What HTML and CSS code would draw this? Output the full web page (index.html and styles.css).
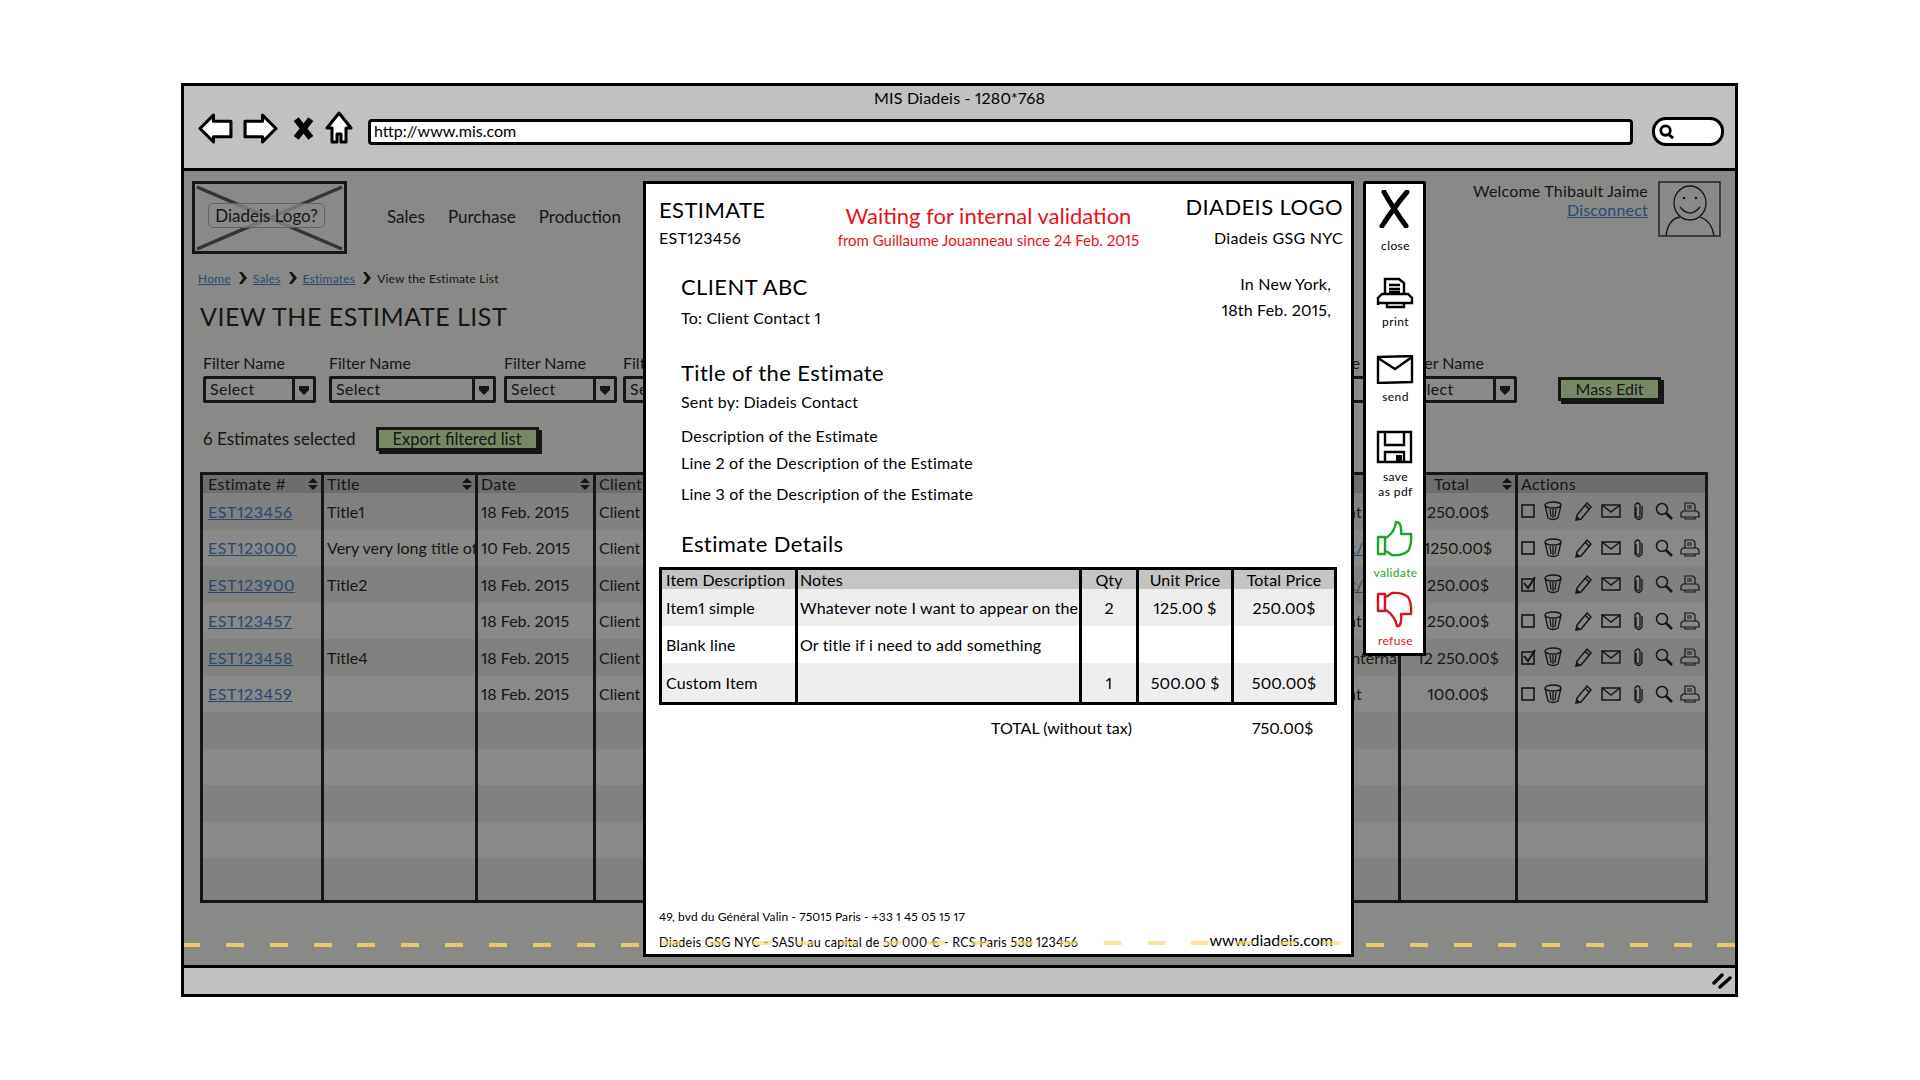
FILE: index.html
```html
<!DOCTYPE html>
<html lang="en">

<head>
    <meta charset="UTF-8">
    <title>MIS Diadeis - 1280*768</title>
    <link rel="stylesheet" href="styles.css">
</head>

<body>
    <svg class="sprites" width="0" height="0">
        <symbol id="sort" viewBox="0 0 10 12"><path d="M5 0 L10 5 H0 Z M0 7 H10 L5 12 Z" /></symbol>
        <symbol id="box" viewBox="0 0 16 16"><rect x="2" y="2" width="12" height="12" fill="none" stroke="#000" stroke-width="1.6" /></symbol>
        <symbol id="boxed" viewBox="0 0 16 16"><rect x="2" y="3" width="12" height="12" fill="none" stroke="#000" stroke-width="1.6" /><path d="M4 7 L8 12 L15 1" fill="none" stroke="#000" stroke-width="2" /></symbol>
        <symbol id="trash" viewBox="0 0 18 20"><g fill="none" stroke="#000" stroke-width="1.3"><ellipse cx="9" cy="4" rx="8" ry="3" /><path d="M1 4 L4 17 Q9 20 14 17 L17 4 M6 8 L7 16 M9 8 V17 M12 8 L11 16" /></g></symbol>
        <symbol id="pencil" viewBox="0 0 18 20"><g fill="none" stroke="#000" stroke-width="1.5"><path d="M12 2 L16 6 L6 18 L1 19 L2 14 Z M10 4 L14 8" /></g><path d="M1 19 L2 15 L5 18 Z" /></symbol>
        <symbol id="mail" viewBox="0 0 20 16"><g fill="none" stroke="#000" stroke-width="1.5"><rect x="1" y="2" width="18" height="12" /><path d="M1 2 L10 9 L19 2" /></g></symbol>
        <symbol id="clip" viewBox="0 0 10 20"><path d="M3 6 V15 Q5 18 7 15 V4 Q5 0 2 4 V16 Q5 21 9 16 V5" fill="none" stroke="#000" stroke-width="1.3" /></symbol>
        <symbol id="search" viewBox="0 0 18 18"><g fill="none" stroke="#000"><circle cx="7" cy="7" r="5.5" stroke-width="1.5" /><path d="M11 11 L17 17" stroke-width="2.6" /></g></symbol>
        <symbol id="printer" viewBox="0 0 20 18"><g fill="none" stroke="#000" stroke-width="1.2"><path d="M5 9 V1 H13 L15 3 V9 M7 4 H12 M7 6 H12" /><path d="M1 15 V11 L3 9 H17 L19 11 V15 Z M5 15 V17 H15 V15" /></g></symbol>
        <symbol id="arrow" viewBox="0 0 12 12"><path d="M1 2 H11 V6 L6 11 L1 6 Z" /></symbol>
        <symbol id="crumb" viewBox="0 0 8 12"><path d="M0 0 H3 L8 6 L3 12 H0 L4 6 Z" /></symbol>
    </svg>

    <div class="window">
        <div class="toolbar">
            <div class="window-title">MIS Diadeis - 1280*768</div>
            <div class="nav-row">
                <svg class="nav-arrow" viewBox="0 0 34 30"><path d="M2 15 L15 2 V8 H32 V23 H15 V28 Z" fill="#fff" stroke="#000" stroke-width="3" stroke-linejoin="round" /></svg>
                <svg class="nav-arrow" viewBox="0 0 34 30"><path d="M32 15 L19 2 V8 H2 V23 H19 V28 Z" fill="#fff" stroke="#000" stroke-width="3" stroke-linejoin="round" /></svg>
                <svg class="nav-stop" viewBox="0 0 20 22"><path d="M3 2 L17 20 M17 2 L3 20" fill="none" stroke="#000" stroke-width="6" /></svg>
                <svg class="nav-home" viewBox="0 0 28 34"><path d="M14 2 L26 17 H21 V31 H16 V23 H12 V31 H7 V17 H2 Z" fill="#fff" stroke="#000" stroke-width="3" stroke-linejoin="round" /></svg>
                <div class="url-bar">http://www.mis.com</div>
                <div class="search-box">
                    <svg class="search-icon" viewBox="0 0 18 18"><circle cx="8" cy="8" r="5" fill="none" stroke="#000" stroke-width="3" /><path d="M11 12 L16 16" stroke="#000" stroke-width="3" /></svg>
                </div>
            </div>
        </div>

        <div class="content">
            <div class="top-row">
                <div class="logo">
                    <svg class="logo-cross" viewBox="0 0 149 67" preserveAspectRatio="none"><path d="M2 3 L147 65 M147 3 L2 65" stroke="#444" stroke-width="3.5" /></svg>
                    <span class="logo-label">Diadeis Logo?</span>
                </div>
                <nav class="menu">
                    <span>Sales</span>
                    <span>Purchase</span>
                    <span>Production</span>
                    <span>Tools</span>
                </nav>
                <div class="user">
                    <div class="user-text">
                        <div>Welcome Thibault Jaime</div>
                        <a class="link" href="#">Disconnect</a>
                    </div>
                    <svg class="avatar" viewBox="0 0 63 56">
                        <g fill="none" stroke="#000" stroke-width="1.3">
                            <rect x="1" y="1" width="61" height="54" />
                            <ellipse cx="32" cy="22" rx="16" ry="17" />
                            <path d="M22 26 Q32 38 42 26 M8 55 Q10 38 22 36 M42 36 Q54 40 56 55" />
                        </g>
                        <circle cx="26" cy="17" r="1.3" /><circle cx="38" cy="17" r="1.3" />
                    </svg>
                </div>
            </div>

            <div class="breadcrumb">
                <a class="link" href="#">Home</a><svg class="crumb"><use href="#crumb" /></svg>
                <a class="link" href="#">Sales</a><svg class="crumb"><use href="#crumb" /></svg>
                <a class="link" href="#">Estimates</a><svg class="crumb"><use href="#crumb" /></svg>
                <span>View the Estimate List</span>
            </div>

            <h1 class="page-title">VIEW THE ESTIMATE LIST</h1>

            <div class="filters">
                <div class="filter filter-sm"><label>Filter Name</label><div class="select"><span>Select</span><i><svg><use href="#arrow" /></svg></i></div></div>
                <div class="filter filter-lg"><label>Filter Name</label><div class="select"><span>Select</span><i><svg><use href="#arrow" /></svg></i></div></div>
                <div class="filter filter-sm"><label>Filter Name</label><div class="select"><span>Select</span><i><svg><use href="#arrow" /></svg></i></div></div>
                <div class="filter filter-sm"><label>Filter Name</label><div class="select"><span>Select</span><i><svg><use href="#arrow" /></svg></i></div></div>
                <div class="filter filter-sm"><label>Filter Name</label><div class="select"><span>Select</span><i><svg><use href="#arrow" /></svg></i></div></div>
                <div class="filter filter-md"><label>Filter Name</label><div class="select"><span>Select</span><i><svg><use href="#arrow" /></svg></i></div></div>
                <button class="btn btn-mass">Mass Edit</button>
            </div>

            <div class="selection">
                <span>6 Estimates selected</span>
                <button class="btn btn-export">Export filtered list</button>
            </div>

            <table class="list">
                <colgroup>
                    <col class="c-num"><col class="c-title"><col class="c-date"><col class="c-client">
                    <col class="c-owner"><col class="c-valid"><col class="c-status"><col class="c-total"><col class="c-act">
                </colgroup>
                <thead>
                    <tr>
                        <th>Estimate #<svg class="sort"><use href="#sort" /></svg></th>
                        <th>Title<svg class="sort"><use href="#sort" /></svg></th>
                        <th>Date<svg class="sort"><use href="#sort" /></svg></th>
                        <th>Client</th>
                        <th></th>
                        <th></th>
                        <th></th>
                        <th class="th-total">Total<svg class="sort"><use href="#sort" /></svg></th>
                        <th>Actions</th>
                    </tr>
                </thead>
                <tbody>
                    <tr>
                        <td><a class="link" href="#">EST123456</a></td><td>Title1</td><td>18 Feb. 2015</td><td>Client</td><td></td><td></td><td>Sent</td><td class="num">250.00$</td>
                        <td><div class="acts"><svg class="a-box"><use href="#box" /></svg><svg class="a-trash"><use href="#trash" /></svg><svg class="a-pencil"><use href="#pencil" /></svg><svg class="a-mail"><use href="#mail" /></svg><svg class="a-clip"><use href="#clip" /></svg><svg class="a-search"><use href="#search" /></svg><svg class="a-printer"><use href="#printer" /></svg></div></td>
                    </tr>
                    <tr>
                        <td><a class="link" href="#">EST123000</a></td><td>Very very long title of the estimate</td><td>10 Feb. 2015</td><td>Client</td><td></td><td></td><td><a class="link" href="#">Ask/Edit</a></td><td class="num">1250.00$</td>
                        <td><div class="acts"><svg class="a-box"><use href="#box" /></svg><svg class="a-trash"><use href="#trash" /></svg><svg class="a-pencil"><use href="#pencil" /></svg><svg class="a-mail"><use href="#mail" /></svg><svg class="a-clip"><use href="#clip" /></svg><svg class="a-search"><use href="#search" /></svg><svg class="a-printer"><use href="#printer" /></svg></div></td>
                    </tr>
                    <tr>
                        <td><a class="link" href="#">EST123900</a></td><td>Title2</td><td>18 Feb. 2015</td><td>Client</td><td></td><td></td><td><a class="link" href="#">Ask/Edit</a></td><td class="num">250.00$</td>
                        <td><div class="acts"><svg class="a-box"><use href="#boxed" /></svg><svg class="a-trash"><use href="#trash" /></svg><svg class="a-pencil"><use href="#pencil" /></svg><svg class="a-mail"><use href="#mail" /></svg><svg class="a-clip"><use href="#clip" /></svg><svg class="a-search"><use href="#search" /></svg><svg class="a-printer"><use href="#printer" /></svg></div></td>
                    </tr>
                    <tr>
                        <td><a class="link" href="#">EST123457</a></td><td></td><td>18 Feb. 2015</td><td>Client</td><td></td><td></td><td>Sent</td><td class="num">250.00$</td>
                        <td><div class="acts"><svg class="a-box"><use href="#box" /></svg><svg class="a-trash"><use href="#trash" /></svg><svg class="a-pencil"><use href="#pencil" /></svg><svg class="a-mail"><use href="#mail" /></svg><svg class="a-clip"><use href="#clip" /></svg><svg class="a-search"><use href="#search" /></svg><svg class="a-printer"><use href="#printer" /></svg></div></td>
                    </tr>
                    <tr>
                        <td><a class="link" href="#">EST123458</a></td><td>Title4</td><td>18 Feb. 2015</td><td>Client</td><td></td><td></td><td>In internal</td><td class="num">12 250.00$</td>
                        <td><div class="acts"><svg class="a-box"><use href="#boxed" /></svg><svg class="a-trash"><use href="#trash" /></svg><svg class="a-pencil"><use href="#pencil" /></svg><svg class="a-mail"><use href="#mail" /></svg><svg class="a-clip"><use href="#clip" /></svg><svg class="a-search"><use href="#search" /></svg><svg class="a-printer"><use href="#printer" /></svg></div></td>
                    </tr>
                    <tr>
                        <td><a class="link" href="#">EST123459</a></td><td></td><td>18 Feb. 2015</td><td>Client</td><td></td><td></td><td>Sent</td><td class="num">100.00$</td>
                        <td><div class="acts"><svg class="a-box"><use href="#box" /></svg><svg class="a-trash"><use href="#trash" /></svg><svg class="a-pencil"><use href="#pencil" /></svg><svg class="a-mail"><use href="#mail" /></svg><svg class="a-clip"><use href="#clip" /></svg><svg class="a-search"><use href="#search" /></svg><svg class="a-printer"><use href="#printer" /></svg></div></td>
                    </tr>
                    <tr><td></td><td></td><td></td><td></td><td></td><td></td><td></td><td></td><td></td></tr>
                    <tr><td></td><td></td><td></td><td></td><td></td><td></td><td></td><td></td><td></td></tr>
                    <tr><td></td><td></td><td></td><td></td><td></td><td></td><td></td><td></td><td></td></tr>
                    <tr><td></td><td></td><td></td><td></td><td></td><td></td><td></td><td></td><td></td></tr>
                    <tr class="row-last"><td></td><td></td><td></td><td></td><td></td><td></td><td></td><td></td><td></td></tr>
                </tbody>
            </table>

            <div class="dim"></div>
            <div class="road"></div>

            <div class="modal">
                <div class="road road-pale"></div>
                <header class="modal-head">
                    <div class="head-left">
                        <div class="h-big">ESTIMATE</div>
                        <div class="h-ref">EST123456</div>
                    </div>
                    <div class="head-mid">
                        <div class="wait">Waiting for internal validation</div>
                        <div class="wait-from">from Guillaume Jouanneau since 24 Feb. 2015</div>
                    </div>
                    <div class="head-right">
                        <div class="h-big">DIADEIS LOGO</div>
                        <div class="h-ref h-ref-right">Diadeis GSG NYC</div>
                    </div>
                </header>

                <div class="client">
                    <div>
                        <div class="h-big">CLIENT ABC</div>
                        <div class="line to-line">To: Client Contact 1</div>
                    </div>
                    <div class="place">
                        <div class="line">In New York,</div>
                        <div class="line date-line">18th Feb. 2015,</div>
                    </div>
                </div>

                <div class="body">
                    <div class="h-big title-line">Title of the Estimate</div>
                    <div class="line sent-line">Sent by: Diadeis Contact</div>
                    <div class="line desc-1">Description of the Estimate</div>
                    <div class="line desc-2">Line 2 of the Description of the Estimate</div>
                    <div class="line desc-3">Line 3 of the Description of the Estimate</div>
                    <div class="h-big details-line">Estimate Details</div>
                </div>

                <table class="items">
                    <colgroup>
                        <col class="i-desc"><col class="i-notes"><col class="i-qty"><col class="i-unit"><col class="i-total">
                    </colgroup>
                    <thead>
                        <tr><th>Item Description</th><th>Notes</th><th class="mid">Qty</th><th class="mid">Unit Price</th><th class="mid">Total Price</th></tr>
                    </thead>
                    <tbody>
                        <tr><td>Item1 simple</td><td>Whatever note I want to appear on the</td><td class="mid">2</td><td class="mid">125.00 $</td><td class="mid">250.00$</td></tr>
                        <tr><td>Blank line</td><td>Or title if i need to add something</td><td></td><td></td><td></td></tr>
                        <tr><td>Custom Item</td><td></td><td class="mid">1</td><td class="mid">500.00 $</td><td class="mid">500.00$</td></tr>
                    </tbody>
                </table>

                <div class="total">
                    <span class="total-label">TOTAL (without tax)</span>
                    <span class="total-value">750.00$</span>
                </div>

                <footer class="modal-foot">
                    <div class="addr">49, bvd du Général Valin - 75015 Paris - +33 1 45 05 15 17</div>
                    <div class="legal-row">
                        <span class="legal">Diadeis GSG NYC - SASU au capital de 50 000 € - RCS Paris 538 123456</span>
                        <span class="site">www.diadeis.com</span>
                    </div>
                </footer>
            </div>

            <aside class="side">
                <div class="side-item item-close">
                    <svg class="i-x" viewBox="0 0 32 38"><path d="M5 2 Q14 18 27 36 M28 2 Q16 16 3 36" fill="none" stroke="#000" stroke-width="5" stroke-linecap="round" /></svg>
                    <span>close</span>
                </div>
                <div class="side-item item-print">
                    <svg class="i-print" viewBox="0 0 38 32"><g fill="none" stroke="#000" stroke-width="2.4"><path d="M9 17 V2 H23 L28 6 V17 M13 8 H24 M13 12 H24 M13 15 H24" /><path d="M2 28 V21 L6 17 H32 L36 21 V26 H2 M11 26 V30 H28 V26" /></g></svg>
                    <span>print</span>
                </div>
                <div class="side-item item-send">
                    <svg class="i-send" viewBox="0 0 38 29"><g fill="none" stroke="#000" stroke-width="2.4"><path d="M2 2 L36 1 L36 27 L2 28 Z" /><path d="M2 3 L19 14 L36 2" /></g></svg>
                    <span>send</span>
                </div>
                <div class="side-item item-save">
                    <svg class="i-save" viewBox="0 0 37 34"><g fill="none" stroke="#000" stroke-width="2.4"><path d="M2 2 H35 V32 H2 Z" /><path d="M9 2 V15 H28 V2 M9 32 V22 H28 V32" /></g><rect x="20" y="25" width="6" height="6" /></svg>
                    <span>save<br>as pdf</span>
                </div>
                <div class="side-item item-ok">
                    <svg class="i-thumb" viewBox="0 0 37 37"><g fill="none" stroke="#1fa52a" stroke-width="2.4" stroke-linejoin="round"><path d="M2 17 H9 V34 H2 Z" /><path d="M10 18 Q19 12 20 2 Q26 2 25 14 H35 Q36 24 32 31 Q26 36 16 35 L10 31" /></g></svg>
                    <span>validate</span>
                </div>
                <div class="side-item item-no">
                    <svg class="i-thumb" viewBox="0 0 37 37"><g fill="none" stroke="#d8141c" stroke-width="2.4" stroke-linejoin="round"><path d="M2 3 H9 V20 H2 Z" /><path d="M10 19 Q19 25 21 35 Q26 36 25 23 H35 Q36 13 32 6 Q26 1 16 2 L10 6" /></g></svg>
                    <span>refuse</span>
                </div>
            </aside>
        </div>

        <div class="statusbar">
            <svg class="grip" viewBox="0 0 20 16"><path d="M2 10 L10 2 M8 14 L18 5" fill="none" stroke="#000" stroke-width="3.4" stroke-linecap="round" /></svg>
        </div>
    </div>
</body>

</html>
```

FILE: styles.css
```css
* {
    box-sizing: border-box;
}

body {
    margin: 0;
    height: 1080px;
    overflow: hidden;
    background-color: #fff;
    color: #000;
    font-family: Lato, "Noto Sans", sans-serif;
    font-size: 16px;
    font-variant-numeric: proportional-nums;
    padding: 83px 0 0 181px;
}

a.link {
    color: #2c73d3;
    text-decoration: underline;
}

.sprites {
    position: absolute;
}

.window {
    width: 1557px;
    height: 914px;
    border: 3px solid #000;
    display: flex;
    flex-direction: column;
}

/* browser bar */
.toolbar {
    height: 85px;
    background-color: #c1c1c1;
    border-bottom: 3px solid #000;
    flex-shrink: 0;
}

.window-title {
    text-align: center;
    font-size: 16px;
    line-height: 20px;
    padding-top: 2px;
    height: 21px;
    letter-spacing: 0.2px;
}

.nav-row {
    display: flex;
    align-items: center;
    padding-left: 14px;
    margin-top: 3px;
}

.nav-arrow {
    width: 35px;
    height: 31px;
    margin-right: 10px;
}

.nav-stop {
    width: 21px;
    height: 23px;
    margin-left: 5px;
    margin-right: 11px;
}

.nav-home {
    width: 28px;
    height: 34px;
    margin-right: 15px;
}

.url-bar {
    width: 1265px;
    height: 26px;
    margin-top: 7px;
    background-color: #fff;
    border: 3px solid #000;
    border-radius: 4px;
    font-size: 16px;
    line-height: 18px;
    padding-left: 3px;
}

.search-box {
    width: 72px;
    height: 29px;
    margin-top: 7px;
    margin-left: 19px;
    background-color: #fff;
    border: 3px solid #000;
    border-radius: 14px;
    padding: 3px 0 0 3px;
}

.search-icon {
    width: 17px;
    height: 17px;
    display: block;
}

/* page */
.content {
    flex: 1;
    position: relative;
    background-color: #fff;
    overflow: hidden;
}

.top-row {
    display: flex;
    padding: 10px 14px 0 8px;
}

.logo {
    position: relative;
    width: 155px;
    height: 73px;
    border: 3px solid #000;
    display: flex;
    align-items: center;
    justify-content: center;
}

.logo-cross {
    position: absolute;
    left: 0;
    top: 0;
    width: 100%;
    height: 100%;
}

.logo-label {
    position: relative;
    font-size: 17px;
    padding: 1px 6px;
    border: 1px solid #aaa;
    border-radius: 5px;
    background-color: rgba(255, 255, 255, 0.75);
    margin: -5px 6px 0 0;
}

.menu {
    display: flex;
    gap: 23px;
    margin-left: 40px;
    margin-top: 26px;
    height: 20px;
    font-size: 17px;
    line-height: 20px;
}

.user {
    margin-left: auto;
    display: flex;
    gap: 10px;
}

.user-text {
    text-align: right;
    font-size: 16px;
    line-height: 19px;
    letter-spacing: 0.2px;
}

.avatar {
    width: 63px;
    height: 56px;
}

.breadcrumb {
    display: flex;
    align-items: center;
    gap: 4px;
    margin: 16px 0 0 14px;
    height: 16px;
    font-size: 12px;
    letter-spacing: 0.2px;
}

.crumb {
    width: 8px;
    height: 12px;
    margin: 0 2px 0 4px;
}

.page-title {
    margin: 15px 0 0 16px;
    font-size: 25px;
    font-weight: 400;
    line-height: 30px;
    letter-spacing: 0.5px;
}

.filters {
    display: grid;
    grid-template-columns: 126px 175px 119px 655px 124px 156px auto;
    margin: 22px 0 0 19px;
}

.filter label {
    display: block;
    line-height: 20px;
    height: 23px;
}

.filter-sm {
    width: 113px;
}

.filter-lg {
    width: 167px;
}

.filter-md {
    width: 115px;
}

.select {
    display: flex;
    height: 27px;
    border: 3px solid #000;
    border-radius: 2px;
    line-height: 20px;
    letter-spacing: 0.3px;
}

.select span {
    flex: 1;
    padding-left: 4px;
}

.select i {
    width: 21px;
    border-left: 3px solid #000;
    display: flex;
    align-items: center;
    justify-content: center;
}

.select i svg {
    width: 12px;
    height: 12px;
}

.btn {
    font: inherit;
    color: #000;
    background-color: #d4ffb4;
    border: 3px solid #000;
    box-shadow: 3px 3px 0 #000;
    padding: 0;
}

.btn-mass {
    width: 103px;
    height: 24px;
    line-height: 16px;
    align-self: end;
    margin-bottom: 2px;
}

.selection {
    display: flex;
    align-items: center;
    margin: 22px 0 0 19px;
    height: 27px;
    font-size: 17px;
}

.btn-export {
    width: 163px;
    height: 24px;
    margin-left: 20px;
    line-height: 16px;
    font-size: 16.5px;
}

/* estimate list */
.list {
    table-layout: fixed;
    border-collapse: separate;
    border-spacing: 0;
    width: 1508px;
    margin: 20px 0 0 16px;
    border: 3px solid #000;
}

.c-num { width: 121px; }
.c-title { width: 154px; }
.c-date { width: 118px; }
.c-client { width: 240px; }
.c-owner { width: 300px; }
.c-valid { width: 191px; }
.c-status { width: 74px; }
.c-total { width: 117px; }

.list th,
.list td {
    border-right: 3px solid #000;
    padding: 0 0 0 3px;
    overflow: hidden;
    white-space: nowrap;
    text-align: left;
    font-weight: 400;
}

.list th:last-child,
.list td:last-child {
    border-right: 0;
}

.list th {
    position: relative;
    background-color: #c4c4c4;
    height: 18px;
    line-height: 18px;
    letter-spacing: 0.3px;
}

.list td {
    height: 36.5px;
}

.list td:first-child a {
    letter-spacing: 0.6px;
}

.list .row-last td {
    height: 42px;
}

.list td:first-child {
    padding-left: 5px;
}

.list tbody tr:nth-child(odd) td {
    background-color: #ededed;
}

.list td.num {
    text-align: center;
    padding: 0;
}

.list th:first-child {
    padding-left: 5px;
}

.th-total {
    padding-left: 33px !important;
}

.sort {
    position: absolute;
    right: 3px;
    top: 3px;
    width: 10px;
    height: 12px;
}

.acts {
    display: flex;
    align-items: center;
    height: 20px;
}

.acts svg {
    flex-shrink: 0;
}

.list td:last-child {
    padding-left: 2px;
}

.a-box { width: 16px; height: 16px; margin-right: 8px; }
.a-trash { width: 18px; height: 20px; margin-right: 13px; }
.a-pencil { width: 18px; height: 20px; margin-right: 8px; }
.a-mail { width: 20px; height: 16px; margin-right: 12px; }
.a-clip { width: 10px; height: 20px; margin-right: 12px; }
.a-search { width: 18px; height: 18px; margin-right: 7px; }
.a-printer { width: 20px; height: 18px; }

/* modal on top */
.dim {
    position: absolute;
    inset: 0;
    background-color: rgba(40, 40, 38, 0.55);
}

.road {
    position: absolute;
    left: -2px;
    right: 0;
    top: 772px;
    height: 4px;
    background-image: repeating-linear-gradient(90deg, #e7c96c 0, #e7c96c 18px, transparent 18px, transparent 43.87px);
}

.road-pale {
    left: 0;
    right: 0;
    top: 757px;
    background-image: repeating-linear-gradient(90deg, rgba(250, 215, 110, 0.65) 0, rgba(250, 215, 110, 0.65) 18px, transparent 18px, transparent 43.87px);
    background-position: 18.6px 0;
}

.modal {
    position: absolute;
    left: 459px;
    top: 10px;
    width: 711px;
    height: 776px;
    background-color: #fff;
    border: 3px solid #000;
    padding: 10px 8px 3px 13px;
    display: flex;
    flex-direction: column;
}

.modal-head {
    display: flex;
    justify-content: space-between;
}

.h-big {
    font-size: 22px;
    line-height: 26px;
    letter-spacing: 0.4px;
}

.h-ref {
    font-size: 16px;
    line-height: 20px;
    margin-top: 5px;
    letter-spacing: 0.3px;
}

.head-left {
    margin-top: 3px;
}

.head-right {
    text-align: right;
}

.h-ref-right {
    margin-top: 8px;
}

.head-mid {
    margin: 9px 0 0 26px;
    text-align: center;
    color: #e8121a;
}

.wait {
    font-size: 22px;
    line-height: 26px;
}

.wait-from {
    font-size: 15px;
    line-height: 18px;
    margin-top: 2px;
}

.line {
    font-size: 16px;
    line-height: 20px;
    letter-spacing: 0.2px;
}

.client {
    display: flex;
    justify-content: space-between;
    padding: 0 12px 0 22px;
    margin-top: 25px;
}

.to-line {
    margin-top: 8px;
}

.place {
    text-align: right;
}

.date-line {
    margin-top: 6px;
}

.body {
    padding-left: 22px;
}

.title-line {
    margin-top: 32px;
}

.sent-line {
    margin-top: 6px;
}

.desc-1 {
    margin-top: 14px;
}

.desc-2 {
    margin-top: 7px;
}

.desc-3 {
    margin-top: 11px;
}

.details-line {
    margin-top: 27px;
}

.items {
    table-layout: fixed;
    border-collapse: separate;
    border-spacing: 0;
    width: 678px;
    margin-top: 10px;
    border: 3px solid #000;
    letter-spacing: 0.15px;
}

.i-desc { width: 136px; }
.i-notes { width: 284px; }
.i-qty { width: 57px; }
.i-unit { width: 95px; }

.items th,
.items td {
    border-right: 3px solid #000;
    padding: 0 0 0 4px;
    overflow: hidden;
    white-space: nowrap;
    text-align: left;
    font-weight: 400;
}

.items th:nth-child(2),
.items td:nth-child(2) {
    padding-left: 2px;
}

.items th:last-child,
.items td:last-child {
    border-right: 0;
}

.items th {
    height: 19px;
    line-height: 18px;
    background-color: #c4c4c4;
}

.items td {
    height: 37px;
}

.items tbody tr:last-child td {
    height: 39px;
}

.items tbody tr:nth-child(odd) td {
    background-color: #eee;
}

.items .mid {
    text-align: center;
    padding-left: 0;
}

.total {
    display: flex;
    margin-top: 13px;
    line-height: 20px;
    padding-left: 332px;
}

.total-value {
    margin-left: 120px;
}

.modal-foot {
    margin-top: auto;
}

.addr {
    font-size: 12px;
    line-height: 16px;
    letter-spacing: 0.1px;
}

.legal {
    font-size: 12.5px;
    line-height: 16px;
    letter-spacing: 0.25px;
}

.legal-row {
    display: flex;
    justify-content: space-between;
    align-items: center;
    margin-top: 10px;
    padding-right: 10px;
}

.site {
    font-size: 16px;
    line-height: 16px;
    margin-top: -6px;
}

.side {
    position: absolute;
    left: 1179px;
    top: 10px;
    width: 63px;
    height: 475px;
    background-color: #fff;
    border: 3px solid #000;
    border-radius: 2px;
    display: flex;
    flex-direction: column;
    align-items: center;
}

.side-item {
    display: flex;
    flex-direction: column;
    align-items: center;
    font-size: 12px;
    line-height: 15px;
    text-align: center;
    letter-spacing: 0.4px;
}

.side-item svg {
    display: block;
}

.side-item span {
    margin-left: 2px;
}

.item-close {
    margin-top: 6px;
}

.i-x {
    width: 32px;
    height: 38px;
    margin-bottom: 10px;
}

.item-print {
    margin-top: 24px;
}

.i-print {
    width: 38px;
    height: 32px;
    margin-bottom: 5px;
}

.item-send {
    margin-top: 26px;
}

.i-send {
    width: 38px;
    height: 29px;
    margin-bottom: 5px;
}

.item-save {
    margin-top: 26px;
}

.i-save {
    width: 37px;
    height: 34px;
    margin-bottom: 5px;
}

.item-ok {
    margin-top: 21px;
    color: #1fa52a;
}

.i-thumb {
    width: 37px;
    height: 37px;
    margin-bottom: 8px;
}

.item-no {
    margin-top: 11px;
    color: #d8141c;
}

.item-no .i-thumb {
    margin-bottom: 5px;
}

.statusbar {
    flex: 1;
    max-height: 29px;
    min-height: 29px;
    background-color: #c1c1c1;
    border-top: 3px solid #000;
    display: flex;
    justify-content: flex-end;
    align-items: center;
    padding-right: 3px;
}

.grip {
    width: 20px;
    height: 16px;
}
```
